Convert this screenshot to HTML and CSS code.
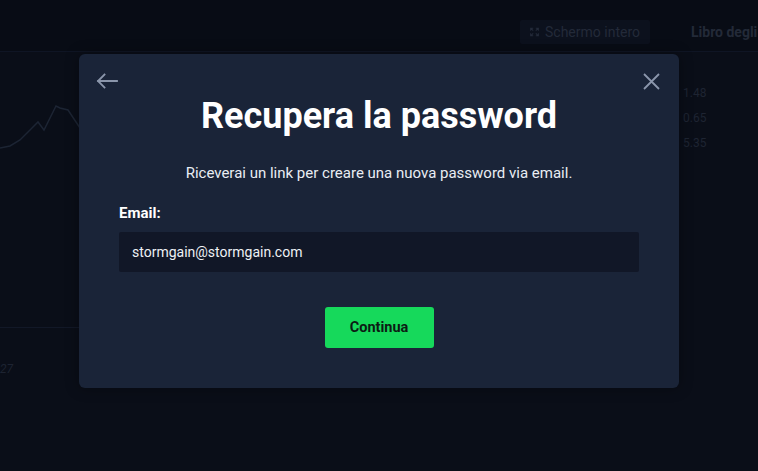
FILE: index.html
```html
<!DOCTYPE html>
<html lang="it">
<head>
<meta charset="utf-8">
<title>Recupera la password</title>
<link rel="stylesheet" href="styles.css">
</head>
<body>
<div class="app">
  <header class="topbar">
    <div class="spacer"></div>
    <button class="fs-btn">
      <svg width="14" height="14" viewBox="0 0 14 14" fill="none" stroke="currentColor" stroke-width="1.6"><path d="M1 5V1h4M9 1h4v4M13 9v4H9M5 13H1V9M1 1l4 4M13 1L9 5M13 13L9 9M1 13l4-4"/></svg>
      Schermo intero
    </button>
    <div class="book-title">Libro degli</div>
  </header>
  <div class="main">
    <div class="chart">
      <svg class="chart-line" width="500" height="200" viewBox="0 0 500 200"><polyline points="0,96 10,94 20,88 32,76 38,70 44,78 56,54 60,56 68,58 80,76 100,98" fill="none" stroke="#1c2433" stroke-width="1.5"/></svg>
      <div class="chart-rule"></div>
      <div class="axis-label">27</div>
    </div>
    <div class="book">
      <div class="book-row">1.48</div>
      <div class="book-row">0.65</div>
      <div class="book-row">5.35</div>
    </div>
  </div>
</div>

<div class="modal">
  <button class="icon-btn back" aria-label="Indietro">
    <svg width="22" height="16" viewBox="0 0 22 16" fill="none" stroke="currentColor" stroke-width="1.8" stroke-linecap="square"><path d="M21 8H2M8.5 1.5L2 8l6.5 6.5"/></svg>
  </button>
  <button class="icon-btn close" aria-label="Chiudi">
    <svg width="17" height="17" viewBox="0 0 17 17" fill="none" stroke="currentColor" stroke-width="1.8"><path d="M1 1l15 15M16 1L1 16"/></svg>
  </button>
  <h1 class="title">Recupera la password</h1>
  <p class="subtitle">Riceverai un link per creare una nuova password via email.</p>
  <label class="field-label" for="email">Email:</label>
  <div class="input">stormgain@stormgain.com</div>
  <div class="actions">
    <button class="primary">Continua</button>
  </div>
</div>
</body>
</html>
```
FILE: styles.css
```css
* { box-sizing: border-box; }
html, body { margin: 0; padding: 0; }
body {
  width: 758px;
  height: 471px;
  overflow: hidden;
  background: #0a0e18;
  font-family: Roboto, "Noto Sans", sans-serif;
  position: relative;
}
.app { height: 100%; display: flex; flex-direction: column; }
.topbar {
  height: 52px;
  display: flex;
  align-items: center;
  background: #080c15;
  border-bottom: 1px solid #0f1524;
}
.spacer { width: 520px; flex: none; }
.fs-btn {
  height: 24px;
  width: 130px;
  flex: none;
  margin-top: 12px;
  display: flex;
  align-items: center;
  gap: 6px;
  padding: 0 10px;
  background: #0c111d;
  border: none;
  border-radius: 2px;
  color: #232a39;
  font-family: Roboto, sans-serif;
  font-size: 14px;
  white-space: nowrap;
}
.book-title {
  margin-left: 41px;
  margin-top: 12px;
  color: #232a38;
  font-weight: 700;
  font-size: 14px;
  white-space: nowrap;
}
.main { flex: 1; display: flex; }
.chart { width: 675px; flex: none; position: relative; }
.chart-line { position: absolute; left: 0; top: 0; }
.chart-rule { position: absolute; left: 0; right: 0; top: 275px; height: 1px; background: #121827; }
.axis-label { position: absolute; left: 0; top: 310px; color: #1d2331; font-size: 12px; font-style: italic; }
.book { padding: 33px 0 0 8px; display: flex; flex-direction: column; gap: 9px; }
.book-row { color: #1e2432; font-size: 12px; line-height: 16px; }

.modal {
  position: absolute;
  left: 79px;
  top: 54px;
  width: 600px;
  height: 334px;
  background: #1a2438;
  border-radius: 6px;
  padding: 40px 40px 40px;
  display: flex;
  flex-direction: column;
  box-shadow: 0 0 14px rgba(0,0,0,0.35);
}
.icon-btn {
  position: absolute;
  background: none;
  border: none;
  padding: 0;
  color: #8b96ab;
  display: flex;
}
.back { left: 17px; top: 19px; }
.close { right: 19px; top: 19px; }
.title {
  margin: 0;
  text-align: center;
  color: #ffffff;
  font-size: 36px;
  line-height: 44px;
  font-weight: 700;
}
.subtitle {
  margin: 25px 0 0;
  text-align: center;
  color: #e9edf3;
  font-size: 15px;
  line-height: 20px;
}
.field-label {
  margin-top: 20px;
  color: #ffffff;
  font-size: 15px;
  font-weight: 700;
  line-height: 20px;
}
.input {
  margin-top: 9px;
  height: 40px;
  background: #111727;
  border-radius: 2px;
  padding: 0 13px;
  display: flex;
  align-items: center;
  color: #eef1f5;
  font-size: 14px;
}
.actions { margin-top: 35px; display: flex; justify-content: center; }
.primary {
  width: 109px;
  height: 41px;
  background: #16d95b;
  border: none;
  border-radius: 3px;
  color: #0c1c14;
  font-family: Roboto, sans-serif;
  font-size: 14.5px;
  font-weight: 700;
}
```
